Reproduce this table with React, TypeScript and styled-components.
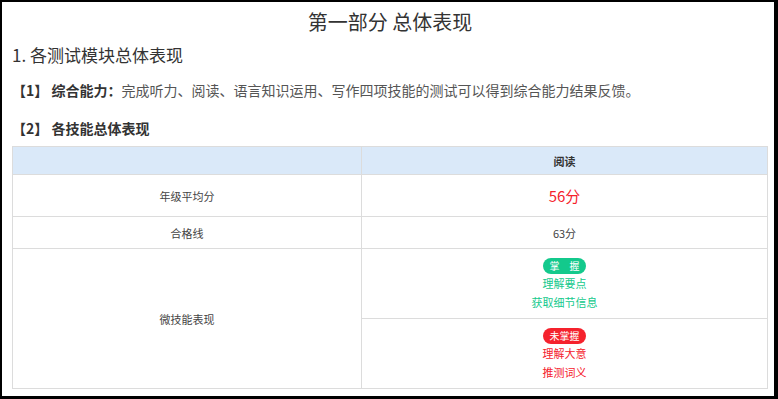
import React from "react";
import styled, { createGlobalStyle } from "styled-components";

const GlobalStyle = createGlobalStyle`
  html, body {
    margin: 0;
    padding: 0;
    background: #000;
  }
  body {
    font-family: "Noto Sans CJK SC", "Noto Sans", "Liberation Sans", sans-serif;
  }
`;

const Page = styled.div`
  margin: 2px 4px 0 2px;
  height: 394px;
  overflow: hidden;
  background: #fff;
  padding: 8px 6px 0 10px;
  box-sizing: border-box;
  color: #333;
`;

const Title = styled.h1`
  margin: 0;
  font-size: 20px;
  line-height: 24px;
  font-weight: 400;
  text-align: center;
  color: #333;
`;

const Heading = styled.h2`
  margin: 9px 0 0;
  font-size: 17px;
  line-height: 24px;
  font-weight: 400;
  color: #333;
`;

const Para = styled.p<{ $gap: number }>`
  margin: ${(p) => p.$gap}px 0 0;
  font-size: 14px;
  line-height: 20px;
  color: #555;

  b {
    font-weight: 700;
    color: #333;
  }
`;

const Table = styled.table`
  margin-top: 8px;
  width: 756px;
  border-collapse: collapse;
  table-layout: fixed;
  font-size: 11px;
  color: #444;

  td,
  th {
    border: 1px solid #dcdcdc;
    text-align: center;
    vertical-align: middle;
    padding: 0;
  }
`;

const HeadRow = styled.tr`
  height: 28px;
  background: #dae9f9;

  th {
    font-weight: 700;
    color: #333;
  }
`;

const Row = styled.tr<{ $h: number }>`
  height: ${(p) => p.$h}px;
`;

const Score = styled.span`
  font-size: 15px;
  color: #f5222d;
`;

const SkillCell = styled.div`
  display: flex;
  flex-direction: column;
  align-items: center;
  padding: 9px 0 6px;
`;

const Badge = styled.span<{ $tone: string }>`
  display: inline-flex;
  align-items: center;
  justify-content: center;
  width: 43px;
  height: 16px;
  border-radius: 8px;
  background: ${(p) => p.$tone};
  color: #fff;
  font-size: 10px;
  line-height: 16px;
  white-space: pre;
`;

const Skill = styled.div<{ $tone: string }>`
  font-size: 11px;
  line-height: 19px;
  color: ${(p) => p.$tone};
`;

const GREEN = "#13c98c";
const RED = "#f5222d";

const groups = [
  { label: "掌　握", tone: GREEN, items: ["理解要点", "获取细节信息"] },
  { label: "未掌握", tone: RED, items: ["理解大意", "推测词义"] },
];

const App = () => {
  return (
    <>
      <GlobalStyle />
      <Page>
        <Title>第一部分 总体表现</Title>
        <Heading>1. 各测试模块总体表现</Heading>
        <Para $gap={13}>
          <b>【1】 综合能力：</b>完成听力、阅读、语言知识运用、写作四项技能的测试可以得到综合能力结果反馈。
        </Para>
        <Para $gap={18}>
          <b>【2】 各技能总体表现</b>
        </Para>
        <Table>
          <colgroup>
            <col style={{ width: 349 }} />
            <col />
          </colgroup>
          <thead>
            <HeadRow>
              <th></th>
              <th>阅读</th>
            </HeadRow>
          </thead>
          <tbody>
            <Row $h={42}>
              <td>年级平均分</td>
              <td>
                <Score>56分</Score>
              </td>
            </Row>
            <Row $h={32}>
              <td>合格线</td>
              <td>63分</td>
            </Row>
            {groups.map((g, i) => (
              <Row $h={i === 0 ? 70 : 69} key={g.label}>
                {i === 0 && <td rowSpan={2}>微技能表现</td>}
                <td>
                  <SkillCell>
                    <Badge $tone={g.tone}>{g.label}</Badge>
                    {g.items.map((s) => (
                      <Skill $tone={g.tone} key={s}>
                        {s}
                      </Skill>
                    ))}
                  </SkillCell>
                </td>
              </Row>
            ))}
          </tbody>
        </Table>
      </Page>
    </>
  );
};

export default App;
